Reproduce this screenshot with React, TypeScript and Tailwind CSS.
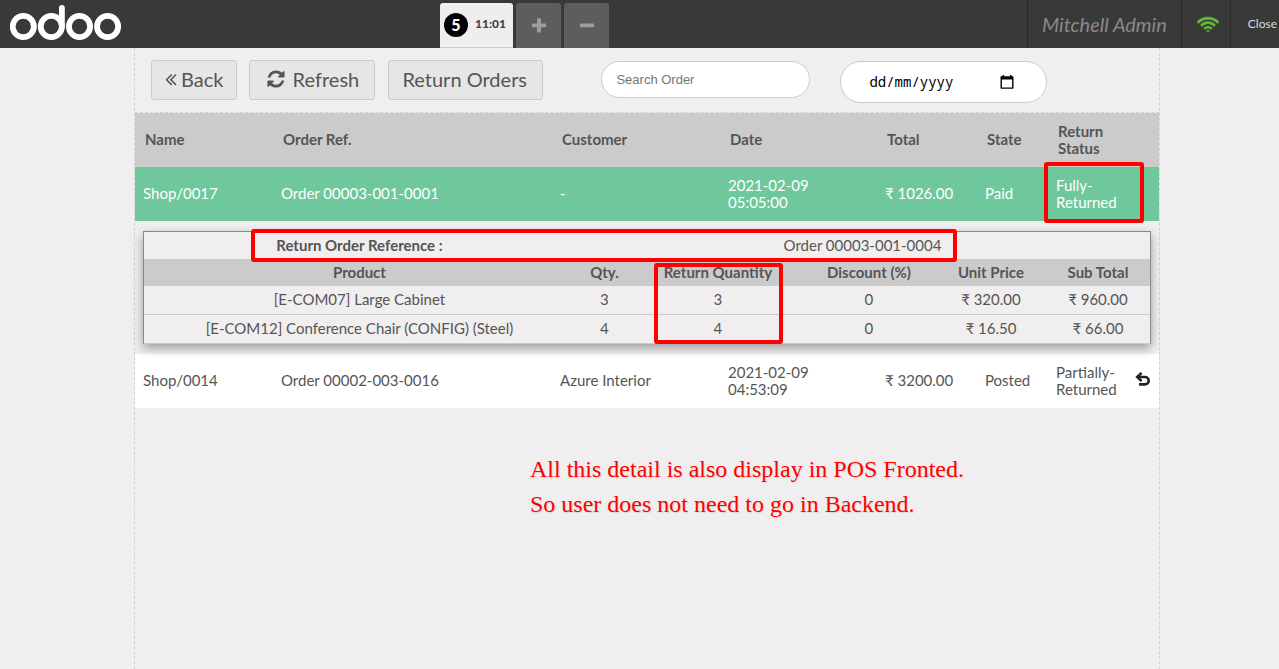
import type { ReactNode } from "react";

type Order = {
  name: string;
  ref: string;
  customer: string;
  date: string;
  total: string;
  state: string;
  status: string;
};

const returned: Order = {
  name: "Shop/0017",
  ref: "Order 00003-001-0001",
  customer: "-",
  date: "2021-02-09 05:05:00",
  total: "₹ 1026.00",
  state: "Paid",
  status: "Fully-Returned",
};

const partial: Order = {
  name: "Shop/0014",
  ref: "Order 00002-003-0016",
  customer: "Azure Interior",
  date: "2021-02-09 04:53:09",
  total: "₹ 3200.00",
  state: "Posted",
  status: "Partially-Returned",
};

const lines = [
  ["[E-COM07] Large Cabinet", "3", "3", "0", "₹ 320.00", "₹ 960.00"],
  ["[E-COM12] Conference Chair (CONFIG) (Steel)", "4", "4", "0", "₹ 16.50", "₹ 66.00"],
];

const refreshPath =
  "M1639 1056q0 5-1 7-64 268-268 434.5t-478 166.5q-146 0-282.5-55t-243.5-157l-129 129q-19 19-45 19t-45-19-19-45v-448q0-26 19-45t45-19h448q26 0 45 19t19 45-19 45l-137 137q71 66 161 102t187 36q134 0 250-65t186-179q11-17 53-117 8-23 30-23h192q13 0 22.5 9.5t9.5 22.5zm25-800v448q0 26-19 45t-45 19h-448q-26 0-45-19t-19-45 19-45l138-138q-148-137-349-137-134 0-250 65t-186 179q-11 17-53 117-8 23-30 23h-199q-13 0-22.5-9.5t-9.5-22.5v-7q65-268 270-434.5t480-166.5q146 0 284 55.5t245 156.5l130-129q19-19 45-19t45 19 19 45z";
const backPath =
  "M1011 1376q0 13-10 23l-50 50q-10 10-23 10t-23-10l-466-466q-10-10-10-23t10-23l466-466q10-10 23-10t23 10l50 50q10 10 10 23t-10 23l-393 393 393 393q10 10 10 23zm384 0q0 13-10 23l-50 50q-10 10-23 10t-23-10l-466-466q-10-10-10-23t10-23l466-466q10-10 23-10t23 10l50 50q10 10 10 23t-10 23l-393 393 393 393q10 10 10 23z";
const plusPath =
  "M1600 736v192q0 40-28 68t-68 28h-416v416q0 40-28 68t-68 28h-192q-40 0-68-28t-28-68v-416h-416q-40 0-68-28t-28-68v-192q0-40 28-68t68-28h416v-416q0-40 28-68t68-28h192q40 0 68 28t28 68v416h416q40 0 68 28t28 68z";
const minusPath =
  "M1600 736v192q0 40-28 68t-68 28h-1216q-40 0-68-28t-28-68v-192q0-40 28-68t68-28h1216q40 0 68 28t28 68z";

function Glyph({ d, className, viewBox = "0 0 1792 1792" }: { d: string; className: string; viewBox?: string }) {
  return (
    <svg viewBox={viewBox} className={className} fill="currentColor" aria-hidden="true">
      <path d={d} />
    </svg>
  );
}

function Logo() {
  return (
    <svg viewBox="0 0 112 36" className="h-9 w-28" fill="none" stroke="#fff" strokeWidth="5.8" strokeLinecap="round" role="img" aria-label="odoo">
      <circle cx="13.3" cy="21.5" r="10.6" />
      <circle cx="41.3" cy="21.5" r="10.6" />
      <path d="M51.9 21.5V3" />
      <circle cx="69.5" cy="21.5" r="10.6" />
      <circle cx="97.6" cy="21.5" r="10.6" />
    </svg>
  );
}

function Wifi() {
  return (
    <svg viewBox="0 0 22 17" className="h-[17px] w-[22px]" fill="none" stroke="#5db834" strokeWidth="3" aria-hidden="true">
      <path d="M.7 6.8a14 14 0 0 1 20.6 0" />
      <path d="M4 9.800a9.500 9.500 0 0 1 14 0" strokeWidth="2.7" />
      <path d="M7.300 12.900a5 5 0 0 1 7.400 0" strokeWidth="2.5" />
      <path d="M9.300 14.700q1.700-1.300 3.400 0L11 16.700z" fill="#5db834" stroke="none" />
    </svg>
  );
}

function Calendar() {
  return (
    <svg viewBox="0 0 14 14" className="size-[14px]" aria-hidden="true">
      <path d="M2.500 0H4v1.200h6V0h1.500v1.200h1.200q.8 0 .8.800v11q0 .8-.8.800H1.300q-.8 0-.8-.8V2q0-.8.8-.8h1.200zM1.900 4.500v8h10.200v-8z" fill="#000" fillRule="evenodd" />
    </svg>
  );
}

function ActionButton({ children, className }: { children: ReactNode; className: string }) {
  return (
    <button type="button" className={`flex h-10 items-center rounded-[3px] border border-[#cacaca] bg-[#e6e6e6] pb-[2px] text-xl ${className}`}>
      {children}
    </button>
  );
}

function OrderRow({ order, className, action }: { order: Order; className: string; action?: ReactNode }) {
  return (
    <tr className={`h-[54px] ${className}`}>
      <td className="px-2 pb-[2px]">{order.name}</td>
      <td className="px-2 pb-[2px]">{order.ref}</td>
      <td className="px-2 pb-[2px]">{order.customer}</td>
      <td className="pr-16 pl-2">{order.date}</td>
      <td className="px-2 pb-[2px] whitespace-nowrap">{order.total}</td>
      <td className="px-2 pb-[2px]">{order.state}</td>
      <td className="relative pl-2">
        {order.status}
        {order === returned && (
          <span className="absolute -top-[5px] -left-1 h-[61px] w-[100px] rounded-[3px] border-4 border-[#f00]" />
        )}
      </td>
      <td className="pr-2">{action}</td>
    </tr>
  );
}

function ReturnLines() {
  return (
    <div className="relative mx-2 my-[10px] border border-b-0 border-[#888] shadow-[0_4px_10px_rgba(0,0,0,0.35)]">
      <table className="w-full table-fixed border-separate border-spacing-0 bg-[#f0eeee] text-center">
        <colgroup>
          <col />
          <col className="w-[59px]" />
          <col className="w-[168px]" />
          <col className="w-[134px]" />
          <col className="w-[110px]" />
          <col className="w-[104px]" />
        </colgroup>
        <thead>
          <tr className="h-[27px]">
            <th>Return Order Reference :</th>
            <td colSpan={5}>Order 00003-001-0004</td>
          </tr>
          <tr className="h-[27px] bg-[#cbcbcb]">
            <th>Product</th>
            <th>Qty.</th>
            <th>Return Quantity</th>
            <th>Discount (%)</th>
            <th>Unit Price</th>
            <th>Sub Total</th>
          </tr>
        </thead>
        <tbody>
          {lines.map((line) => (
            <tr key={line[0]} className="h-[29px]">
              {line.map((cell, i) => (
                <td key={i} className="border-b border-[#cbcbcb] pb-px">{cell}</td>
              ))}
            </tr>
          ))}
        </tbody>
      </table>
      <span className="absolute -top-[3px] left-[107px] h-[33px] w-[706px] rounded-[3px] border-4 border-[#f00]" />
      <span className="absolute top-[31px] left-[510px] h-[81px] w-[129px] rounded-[3px] border-4 border-[#f00]" />
    </div>
  );
}

export default function App() {
  return (
    <div className="flex min-h-screen flex-col bg-[#f0eeee] font-[Lato,'Noto_Sans',sans-serif] text-[15px] leading-[17px] text-[#555]">
      <header className="flex h-12 bg-[#393939]">
        <div className="w-[440px] pt-[5px] pl-[10px]">
          <Logo />
        </div>
        <div className="flex items-end gap-[3px]">
          <button type="button" className="flex h-[45px] w-[73px] items-center gap-[7px] rounded-t-[3px] border-b border-[#ccc] bg-[#eee] pl-1 text-xs font-black text-[#444]">
            <span className="flex size-6 items-center justify-center rounded-full bg-black text-base font-black text-white">5</span>
            <span className="pb-[2px]">11:01</span>
          </button>
          <button type="button" aria-label="New order" className="flex h-[45px] w-[45px] items-center justify-center rounded-t-[3px] bg-[#5d5d5d] text-[#9e9e9e]">
            <Glyph d={plusPath} className="size-[18px]" />
          </button>
          <button type="button" aria-label="Delete order" className="flex h-[45px] w-[45px] items-center justify-center rounded-t-[3px] bg-[#5d5d5d] text-[#9e9e9e]">
            <Glyph d={minusPath} className="size-[18px]" />
          </button>
        </div>
        <div className="ml-auto flex items-stretch">
          <div className="flex items-center border-l border-[#292929] px-[14px] text-xl text-[#8a8a8a] italic">Mitchell Admin</div>
          <div className="flex w-[49px] items-center justify-center border-l border-[#292929] pl-1">
            <Wifi />
          </div>
          <button type="button" className="border-l border-[#292929] pr-[2px] pl-[17px] text-xs text-[#ddd]">Close</button>
        </div>
      </header>

      <div className="flex grow justify-center pl-[15px]">
        <main className="w-full max-w-[1026px] border-x border-dashed border-[#d3d3d3]">
          <div className="flex h-16 items-start pt-3 pl-4">
            <ActionButton className="px-[13px]">
              <Glyph d={backPath} viewBox="400 0 1020 1792" className="mr-1 h-5 w-3" />
              Back
            </ActionButton>
            <ActionButton className="ml-3 w-[126px] justify-center">
              <Glyph d={refreshPath} className="mr-[7px] size-5" />
              Refresh
            </ActionButton>
            <ActionButton className="ml-[13px] w-[155px] px-[13px]">Return Orders</ActionButton>
            <input
              type="text"
              aria-label="Search Order"
              placeholder="Search Order"
              className="mt-px ml-[58px] h-[37px] w-[209px] rounded-full border border-[#cbcbcb] bg-white px-[14px] font-['Liberation_Sans',sans-serif] text-[13px] placeholder:text-[#757575]"
            />
            <div className="mt-px ml-[30px] flex h-[42px] w-[207px] items-center rounded-full border border-[#cbcbcb] bg-white pr-8 pl-7">
              <input
                type="text"
                inputMode="numeric"
                aria-label="Order date"
                placeholder="dd/mm/yyyy"
                className="min-w-0 grow bg-transparent font-['Noto_Sans_Mono','DejaVu_Sans_Mono',monospace] text-sm text-black outline-none placeholder:text-black"
              />
              <button type="button" aria-label="Show calendar">
                <Calendar />
              </button>
            </div>
          </div>

          <table className="w-full table-fixed border-separate border-spacing-0 border-t border-dashed border-[#d3d3d3] text-left">
            <colgroup>
              <col className="w-[138px]" />
              <col className="w-[279px]" />
              <col className="w-[168px]" />
              <col className="w-[157px]" />
              <col className="w-[100px]" />
              <col className="w-[71px]" />
              <col className="w-[87px]" />
              <col />
            </colgroup>
            <thead>
              <tr className="h-[54px] bg-[#cbcbcb]">
                <th className="px-[10px] pb-[2px]">Name</th>
                <th className="px-[10px] pb-[2px]">Order Ref.</th>
                <th className="px-[10px] pb-[2px]">Customer</th>
                <th className="px-[10px] pb-[2px]">Date</th>
                <th className="px-[10px] pb-[2px]">Total</th>
                <th className="px-[10px] pb-[2px]">State</th>
                <th className="px-[10px]">Return Status</th>
                <th />
              </tr>
            </thead>
            <tbody>
              <OrderRow order={returned} className="bg-[#6ec89b] text-white" />
              <tr>
                <td colSpan={8}>
                  <ReturnLines />
                </td>
              </tr>
              <OrderRow
                order={partial}
                className="bg-white"
                action={
                  <button type="button" aria-label="Return products" className="mb-1 block text-[#222]">
                    <svg viewBox="0 0 16 14" className="h-[14px] w-4" fill="none" stroke="currentColor" strokeWidth="2.6" aria-hidden="true">
                      <path d="M2.500 5H10a3.700 3.700 0 0 1 0 7.400H4" />
                      <path d="M6.600.9 2.200 5l4.400 4.100" />
                    </svg>
                  </button>
                }
              />
            </tbody>
          </table>

          <p className="mt-11 ml-[395px] font-['Liberation_Serif',serif] text-2xl leading-[35px] text-[#f00] [text-shadow:1px_1px_1px_rgba(0,0,0,0.1)]">
            All this detail is also display in POS Fronted.
            <br />
            So user does not need to go in Backend.
          </p>
        </main>
      </div>
    </div>
  );
}
